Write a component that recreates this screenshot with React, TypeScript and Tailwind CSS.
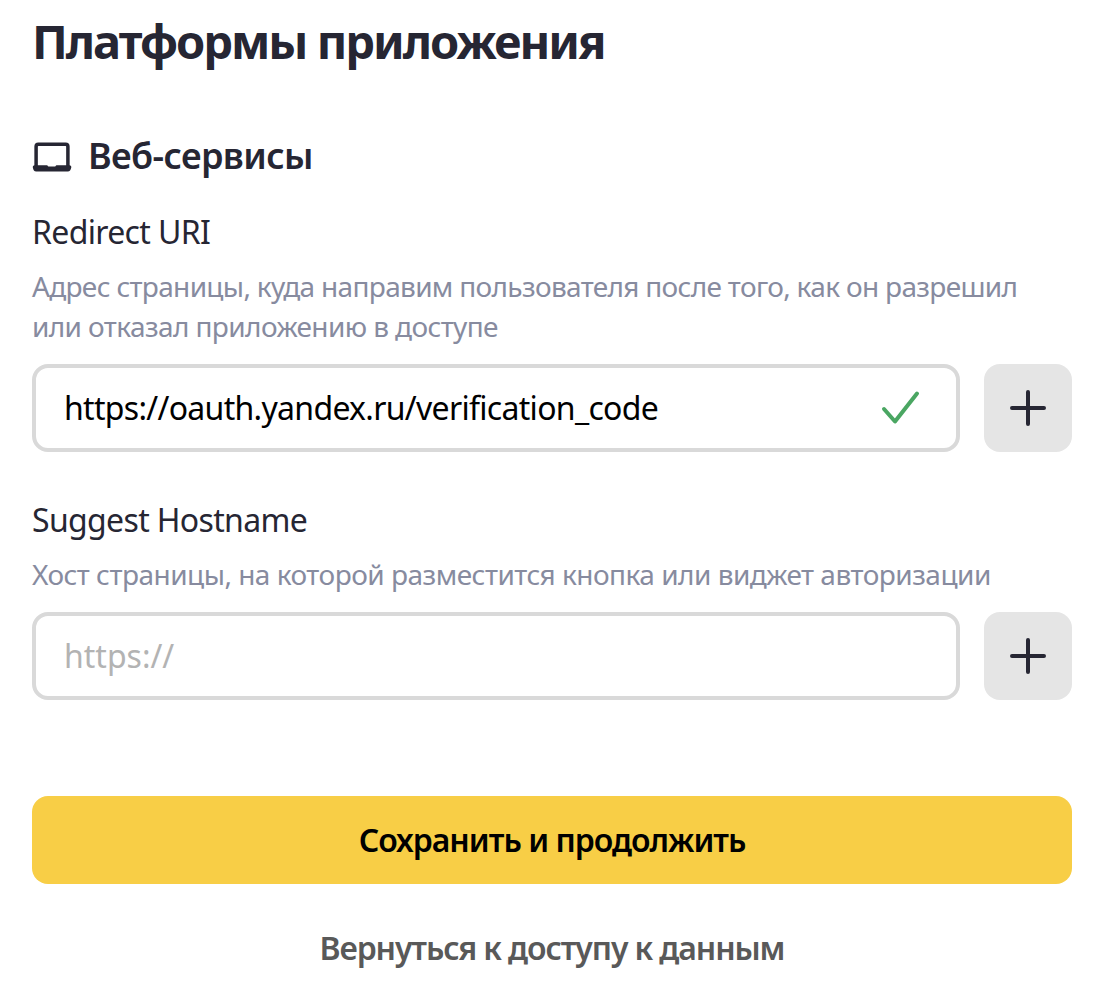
import type { ReactNode } from "react";

function LaptopIcon() {
  return (
    <svg width="40" height="32" viewBox="0 0 40 32" fill="none" aria-hidden="true">
      <rect x="4.1" y="4.3" width="31.8" height="24" rx="2.2" stroke="#262633" strokeWidth="3.5" />
      <path
        d="M2.7 25.3H15C15.8 25.3 16 27.4 17 27.4H22.5C23.5 27.4 23.7 25.3 24.5 25.3H37.4A1.8 1.8 0 0 1 39.2 27.7C38.7 29.9 37.8 31.4 35.8 31.4H4.2C2.2 31.4 1.3 29.9 .9 27.7A1.8 1.8 0 0 1 2.7 25.3Z"
        fill="#262633"
      />
    </svg>
  );
}

function CheckIcon() {
  return (
    <svg width="40" height="40" viewBox="0 0 40 40" fill="none" aria-hidden="true">
      <path d="M4 21 15 33.5 37 5.5" stroke="#4aa662" strokeWidth="4" strokeLinecap="round" strokeLinejoin="round" />
    </svg>
  );
}

function PlusButton() {
  return (
    <button className="flex size-[88px] shrink-0 items-center justify-center rounded-2xl bg-[#e5e5e5]">
      <svg width="36" height="36" viewBox="0 0 36 36" fill="none" aria-hidden="true">
        <path d="M18 2V34M2 18H34" stroke="#262633" strokeWidth="4" strokeLinecap="round" />
      </svg>
    </button>
  );
}

function Field({ label, hint, children }: { label: string; hint: ReactNode; children: ReactNode }) {
  return (
    <section>
      <h3 className="text-[32px] leading-10 tracking-[-0.65px] whitespace-nowrap">{label}</h3>
      <p className="mt-3.5 text-[28px] leading-10 whitespace-nowrap text-[#878b9f]">{hint}</p>
      <div className="mt-[18px] flex gap-6">
        <div className="flex h-[88px] flex-1 items-center justify-between rounded-2xl border-4 border-[#d9d9d9] pr-9 pl-7 text-[32px] leading-10">
          {children}
        </div>
        <PlusButton />
      </div>
    </section>
  );
}

export default function App() {
  return (
    <main className="h-[989px] w-[1109px] overflow-hidden bg-white pt-[13px] pr-[37px] pl-8 font-['Noto_Sans',sans-serif] text-[#262633]">
      <h1 className="text-[47px] leading-14 font-bold tracking-[-2px] whitespace-nowrap">Платформы приложения</h1>
      <div className="mt-[65px] flex h-11 items-center gap-4">
        <LaptopIcon />
        <h2 className="text-[36px] leading-11 font-semibold tracking-[-0.6px] whitespace-nowrap">Веб-сервисы</h2>
      </div>
      <div className="mt-[34px] flex flex-col gap-12">
        <Field
          label="Redirect URI"
          hint={
            <span className="tracking-[-0.67px]">
              Адрес страницы, куда направим пользователя после того, как он разрешил
              <br />
              <span className="tracking-[-0.6px]">или отказал приложению в доступе</span>
            </span>
          }
        >
          <span className="tracking-[-0.7px] text-black">https://oauth.yandex.ru/verification_code</span>
          <CheckIcon />
        </Field>
        <Field
          label="Suggest Hostname"
          hint={
            <span className="tracking-[-0.51px]">
              Хост страницы, на которой разместится кнопка или виджет авторизации
            </span>
          }
        >
          <span className="text-[#b3b3b3]">https://</span>
        </Field>
      </div>
      <button className="mt-24 flex h-[88px] w-full items-center justify-center rounded-2xl bg-[#f8ce46] text-[32px] font-semibold tracking-[-1px] text-black">
        Сохранить и продолжить
      </button>
      <button className="mt-5 flex h-[88px] w-full items-center justify-center text-[32px] font-semibold tracking-[-1.1px] text-[#595959]">
        Вернуться к доступу к данным
      </button>
    </main>
  );
}
